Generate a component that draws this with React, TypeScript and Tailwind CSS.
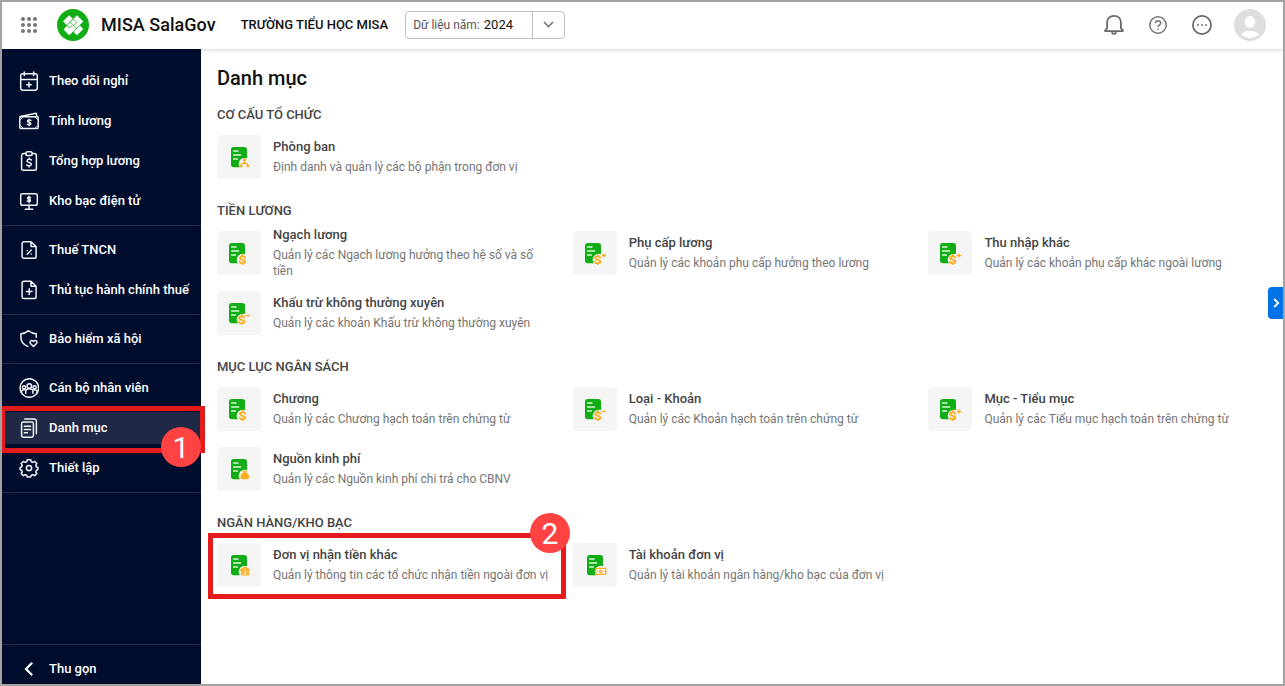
import clsx from 'clsx';
import React from 'react';

type TileKind = 'org' | 'dollar' | 'plus' | 'minus' | 'bag' | 'house' | 'note';

interface Item {
  title: string;
  description: string;
  icon: TileKind;
  step?: number;
}

interface Section {
  label: string;
  items: Item[];
}

interface MenuItem {
  label: string;
  icon: React.ReactNode;
  active?: boolean;
}

const SECTIONS: Section[] = [
  {
    label: 'CƠ CẤU TỔ CHỨC',
    items: [
      {
        title: 'Phòng ban',
        description: 'Định danh và quản lý các bộ phận trong đơn vị',
        icon: 'org',
      },
    ],
  },
  {
    label: 'TIỀN LƯƠNG',
    items: [
      {
        title: 'Ngạch lương',
        description: 'Quản lý các Ngạch lương hưởng theo hệ số và số tiền',
        icon: 'dollar',
      },
      {
        title: 'Phụ cấp lương',
        description: 'Quản lý các khoản phụ cấp hưởng theo lương',
        icon: 'plus',
      },
      {
        title: 'Thu nhập khác',
        description: 'Quản lý các khoản phụ cấp khác ngoài lương',
        icon: 'plus',
      },
      {
        title: 'Khấu trừ không thường xuyên',
        description: 'Quản lý các khoản Khấu trừ không thường xuyên',
        icon: 'minus',
      },
    ],
  },
  {
    label: 'MỤC LỤC NGÂN SÁCH',
    items: [
      {
        title: 'Chương',
        description: 'Quản lý các Chương hạch toán trên chứng từ',
        icon: 'dollar',
      },
      {
        title: 'Loại - Khoản',
        description: 'Quản lý các Khoản hạch toán trên chứng từ',
        icon: 'minus',
      },
      {
        title: 'Mục - Tiểu mục',
        description: 'Quản lý các Tiểu mục hạch toán trên chứng từ',
        icon: 'plus',
      },
      {
        title: 'Nguồn kinh phí',
        description: 'Quản lý các Nguồn kinh phí chi trả cho CBNV',
        icon: 'bag',
      },
    ],
  },
  {
    label: 'NGÂN HÀNG/KHO BẠC',
    items: [
      {
        title: 'Đơn vị nhận tiền khác',
        description: 'Quản lý thông tin các tổ chức nhận tiền ngoài đơn vị',
        icon: 'house',
        step: 2,
      },
      {
        title: 'Tài khoản đơn vị',
        description: 'Quản lý tài khoản ngân hàng/kho bạc của đơn vị',
        icon: 'note',
      },
    ],
  },
];

const MenuIcon: React.FC<{ children: React.ReactNode }> = ({ children }) => (
  <svg
    width="20"
    height="20"
    viewBox="0 0 20 20"
    fill="none"
    stroke="#f1f2f5"
    strokeWidth="1.5"
    strokeLinecap="round"
    strokeLinejoin="round"
    className="shrink-0"
  >
    {children}
  </svg>
);

const MENU: MenuItem[][] = [
  [
    {
      label: 'Theo dõi nghỉ',
      icon: (
        <MenuIcon>
          <rect x="1.7" y="2.7" width="16.6" height="16.6" rx="2.2" />
          <path d="M1.7 8.6h16.6M5.3 .9v3.6M14.7 .9v3.6M10 11.6v4.4M7.8 13.8h4.4" />
        </MenuIcon>
      ),
    },
    {
      label: 'Tính lương',
      icon: (
        <MenuIcon>
          <rect x=".8" y="5.8" width="18.4" height="11.6" rx="1" />
          <path d="M1.2 5.6 17.2 2.2l.8 3.4" />
          <path
            d="M1.5 8.500 3.500 6.500M18.500 8.500l-2-2M1.500 14.700l2 2M18.500 14.700l-2 2"
            strokeWidth="1"
          />
          <path
            d="M12 9.500c-.6-.8-3.700-.9-3.700.6 0 1.600 3.700 1 3.700 2.600 0 1.600-3.200 1.400-3.900.6M10.100 8.200v6.600"
            strokeWidth="1.300"
          />
        </MenuIcon>
      ),
    },
    {
      label: 'Tổng hợp lương',
      icon: (
        <MenuIcon>
          <path d="M6.800 2.600H4.600a2 2 0 0 0-2 2v12.600a2 2 0 0 0 2 2h10.800a2 2 0 0 0 2-2V4.600a2 2 0 0 0-2-2h-2.200" />
          <rect x="6.800" y=".8" width="6.400" height="3.800" rx="1.800" />
          <path d="M12.300 9c-.6-1-4.300-1.100-4.300 1 0 1.900 4.400 1.200 4.400 3.200 0 2-3.900 1.900-4.600.8M10.100 7v1M10.100 15v1" />
        </MenuIcon>
      ),
    },
    {
      label: 'Kho bạc điện tử',
      icon: (
        <MenuIcon>
          <rect x="1.700" y="2.700" width="16.600" height="11.600" rx="1.800" />
          <path d="M10 14.500v3.700M6.300 18.200h7.400" />
          <path d="M11.500 6.600c-.6-.6-3-.6-3 .6s3 .9 3 2.200-2.500 1.200-3.100.5M10 5.200v6.600" />
        </MenuIcon>
      ),
    },
  ],
  [
    {
      label: 'Thuế TNCN',
      icon: (
        <MenuIcon>
          <path d="M12 1.700H5a1.900 1.900 0 0 0-1.900 1.900v12.800A1.900 1.900 0 0 0 5 18.300h10.200a1.900 1.900 0 0 0 1.900-1.900V6.600zM12 1.700v4.900h5" />
          <path d="m8.200 14.300 4-4.200M8.200 10.600v.1M12.200 14v.1" />
        </MenuIcon>
      ),
    },
    {
      label: 'Thủ tục hành chính thuế',
      icon: (
        <MenuIcon>
          <path d="M12 1.200H5a1.900 1.900 0 0 0-1.900 1.900v13.600A1.900 1.900 0 0 0 5 18.600h10.200a1.900 1.900 0 0 0 1.900-1.900V6.200zM12 1.200v5h5" />
          <path d="M10.200 8.800v5.600M7.400 11.600H13" />
        </MenuIcon>
      ),
    },
  ],
  [
    {
      label: 'Bảo hiểm xã hội',
      icon: (
        <MenuIcon>
          <path d="M8.800 17.400C4.600 15.900 1.900 12.400 1.900 8V4.700C4.700 4.800 7 3.800 9.600 1.700c2.500 2.100 4.800 3.100 7.600 3v3.500" />
          <path d="m14.500 17.500-3-3c-1.500-1.600.8-4.200 3-2.100 2.200-2.100 4.500.5 3 2.100z" />
        </MenuIcon>
      ),
    },
  ],
  [
    {
      label: 'Cán bộ nhân viên',
      icon: (
        <MenuIcon>
          <circle cx="10.300" cy="10" r="9.300" />
          <circle cx="10.300" cy="8" r="2.300" />
          <path d="M6.700 15.200v-1.700c0-3.800 7.200-3.800 7.200 0v1.700" />
          <circle cx="5" cy="9.300" r="1.600" />
          <circle cx="15.600" cy="9.300" r="1.600" />
          <path d="M2.400 14.200c0-2.100 1.700-2.900 3.600-2.400M18.200 14.200c0-2.100-1.700-2.900-3.600-2.400" />
        </MenuIcon>
      ),
    },
    {
      label: 'Danh mục',
      active: true,
      icon: (
        <MenuIcon>
          <rect x="2.600" y="4" width="11.800" height="15.200" rx="1.700" />
          <path d="M5.700 1.100h9.700a2 2 0 0 1 2 2v12.600M5.400 8.300h6.200M5.400 11.500h6.200M5.400 14.700h3" />
        </MenuIcon>
      ),
    },
    {
      label: 'Thiết lập',
      icon: (
        <MenuIcon>
          <circle cx="10" cy="10" r="2.600" />
          <path d="m8.300 1.700-.6 2-1.600.7-1.900-1-2 2.200 1 1.800-.6 1.500-1.500.6v2l1.500.7.6 1.600-1 1.700 2.100 2.200 1.900-1 1.500.6.6 1.700h3.400l.6-1.700 1.500-.6 1.900 1 2.100-2.200-1-1.700.6-1.600 1.500-.7v-2l-1.500-.6-.6-1.500 1-1.800-2-2.200-1.900 1-1.600-.7-.6-2z" />
        </MenuIcon>
      ),
    },
  ],
];

const DollarMark: React.FC = () => (
  <g fill="none" stroke="#fbac1c" strokeWidth="1.800" strokeLinecap="round">
    <path d="M16 14.600c-.5-1.800-5.100-1.800-5.100.5 0 2.200 5.300 1.200 5.300 3.500 0 2.200-4.900 2.100-5.500.1M13.500 12v1.200M13.500 20.200v1" />
  </g>
);

const TileIcon: React.FC<{ kind: TileKind }> = ({ kind }) => {
  const isDollar = kind === 'dollar' || kind === 'plus' || kind === 'minus';
  // the signed variants leave room for the +/- on the right
  const isSigned = kind === 'plus' || kind === 'minus';
  return (
    <svg
      width={isDollar ? 22 : 20}
      height="22"
      viewBox={isDollar ? '0 0 22 22' : '0 0 20 22'}
      className={isDollar ? 'ml-3' : 'ml-3.5'}
    >
      <rect width="16" height="20.300" rx="2.800" fill="#10ad15" />
      <path
        d="M2.600 3.900h4.400M2.600 8h7M2.600 12.100h3.800"
        stroke="#dcf3dc"
        strokeWidth="1.500"
        strokeLinecap="round"
      />
      <circle cx="13.800" cy="16.800" r="6.100" fill="#f5f5f5" />
      {isDollar && (
        <g transform={isSigned ? 'translate(-0.800 0)' : undefined}>
          <DollarMark />
        </g>
      )}
      {kind === 'plus' && (
        <path
          d="M16.800 12.500h4.200M18.900 10.400v4.200"
          stroke="#fbac1c"
          strokeWidth="1.300"
        />
      )}
      {kind === 'minus' && (
        <path d="M16.600 12.500h4.400" stroke="#fbac1c" strokeWidth="1.400" />
      )}
      {kind === 'org' && (
        <g fill="none" stroke="#fbac1c" strokeWidth="1.200">
          <path d="M13.500 13v3.300M10.300 18.700v-.8q0-1.600 1.600-1.600h3.200q1.600 0 1.600 1.600v.8" />
          <circle cx="13.500" cy="12.700" r="1" fill="#fbac1c" />
          <circle cx="10.300" cy="19" r=".8" fill="#fbac1c" />
          <circle cx="16.800" cy="19" r=".8" fill="#fbac1c" />
        </g>
      )}
      {kind === 'bag' && (
        <path
          d="m11.300 11.600 1.300.6 1.200-.7 1.200.7 1.500-.6-1.200 2.200c1.900 1 2.800 2.700 2.800 4.300 0 1.400-.9 2.100-2.200 2.100h-4.300c-1.300 0-2.200-.7-2.200-2.100 0-1.600.9-3.300 2.900-4.300z"
          fill="#fbac1c"
        />
      )}
      {kind === 'house' && (
        <g>
          <path d="m9 14.600 5-3.200 5 3.200v1.200H9z" fill="#fbac1c" />
          <rect x="10" y="15.500" width="8" height="5" fill="#fbac1c" />
          <path d="M11.800 17h4.400M11.800 18.800h4.400" stroke="#fde6bd" />
          <circle cx="14" cy="14.300" r=".7" fill="#fff" />
        </g>
      )}
      {kind === 'note' && (
        <g fill="none" stroke="#fbac1c" strokeWidth="1.300">
          <rect x="8.700" y="13.300" width="10" height="6" rx=".5" />
          <circle cx="13.700" cy="16.300" r="1.200" />
          <path d="M10.500 15.500v1.600M16.900 15.500v1.600" strokeWidth=".8" />
        </g>
      )}
    </svg>
  );
};

const StepBadge: React.FC<{ step: number; className: string }> = ({
  step,
  className,
}) => (
  <span
    className={clsx(
      'absolute z-20 flex size-10 items-center justify-center rounded-full bg-[#ff4343] pt-0.5 text-[30px] font-normal leading-none text-white',
      className,
    )}
  >
    {step}
  </span>
);

const Logo: React.FC = () => (
  <svg width="32" height="32" viewBox="0 0 32 32" className="ml-5 shrink-0">
    <circle cx="16" cy="16" r="16" fill="#10ad15" />
    <path
      d="m6 12.300 6-6 4.200 3.600 3.700-3.600 6.400 6.200-3.700 3.700 3.700 3.700-6.400 6.400-3.700-3.900-4 3.900-5.700-5.800 3.700-3.900z"
      fill="#fff"
    />
    <path
      d="m16.200 9.900-3.400 3.300 6.600 6.500-3.200 3M10.200 16.200l2.600-3M16.200 9.900l3.500 3.500-2.800 2.800M22.600 16.200l-3.200 3.500M10.200 16.200l2.500 2.500 2.200-1.700"
      fill="none"
      stroke="#10ad15"
      strokeWidth=".8"
    />
  </svg>
);

const Header: React.FC = () => (
  <header className="relative z-10 flex h-[47px] shrink-0 items-center bg-white pb-0.5 pl-[19px] pr-[17px] shadow-[0_1px_4px_rgba(0,0,0,0.18)]">
    <svg width="16" height="16" viewBox="0 0 16 16" fill="#757575">
      {[2, 8, 14].map((y) =>
        [2, 8, 14].map((x) => <circle key={`${x}-${y}`} cx={x} cy={y} r="2" />),
      )}
    </svg>
    <Logo />
    <span className="ml-3 text-[18px] font-medium leading-6 tracking-[0.03px] text-[#111]">
      MISA SalaGov
    </span>
    <span className="ml-[25px] text-[13px] font-medium text-[#111]">
      TRƯỜNG TIỂU HỌC MISA
    </span>
    <div className="ml-[17px] flex h-7 w-40 items-center rounded border border-[#bfbfbf]">
      <div className="flex flex-1 items-baseline gap-1 pl-[7px]">
        <span className="text-[12px] text-[#555]">Dữ liệu năm:</span>
        <span className="text-[13px] text-[#111]">2024</span>
      </div>
      <span className="flex h-full w-8 items-center justify-center border-l border-[#bfbfbf]">
        <svg width="11" height="7" viewBox="0 0 11 7" fill="none">
          <path d="m1 1 4.500 4.500L10 1" stroke="#757575" strokeWidth="1.600" />
        </svg>
      </span>
    </div>

    <div className="ml-auto flex items-center">
      <svg
        width="20"
        height="22"
        viewBox="0 0 20 22"
        fill="none"
        stroke="#686868"
        strokeWidth="1.800"
        strokeLinejoin="round"
      >
        <path d="M1.200 17.200h17.600v-.9l-1.900-2.100V8.400C16.900 4.500 14 1.900 10 1.900S3.100 4.500 3.100 8.400v5.800l-1.900 2.100z" />
        <path d="M7.800 18.300c.4 2 4 2 4.400 0" />
      </svg>
      <svg
        width="18"
        height="18"
        viewBox="0 0 18 18"
        fill="none"
        stroke="#757575"
        strokeWidth="1.500"
        className="ml-[25px]"
      >
        <circle cx="9" cy="9" r="8.200" />
        <path d="M6.500 7.200c0-3.200 5.200-3.200 5.200-.1 0 2-2.600 2-2.600 4M9.100 12.500v1.400" />
      </svg>
      <svg width="20" height="20" viewBox="0 0 20 20" className="ml-[25px]">
        <circle
          cx="10"
          cy="10"
          r="9.100"
          fill="none"
          stroke="#686868"
          strokeWidth="1.700"
        />
        <path
          d="M5 9.300h1.800v1.500H5zM9.100 9.300h1.800v1.500H9.100zM13.200 9.300H15v1.500h-1.800z"
          fill="#686868"
        />
      </svg>
      <svg width="32" height="32" viewBox="0 0 32 32" className="ml-[22px]">
        <circle cx="16" cy="16" r="16" fill="#dedede" />
        <ellipse cx="16" cy="13" rx="5.300" ry="6" fill="#fff" />
        <path
          d="M7 25.600C8.700 23 12 21.800 16 21.800s7.300 1.200 9 3.800c-2.400 2.200-5.500 3.400-9 3.400s-6.600-1.200-9-3.400z"
          fill="#fff"
        />
      </svg>
    </div>
  </header>
);

const Sidebar: React.FC = () => (
  <aside className="z-20 flex w-[199px] shrink-0 flex-col bg-[#000d2d] pt-2 text-white">
    {MENU.map((group) => (
      <ul
        key={group[0].label}
        className="flex flex-col gap-2 border-b border-[#1f2a47] py-2"
      >
        {group.map((item) => (
          <li
            key={item.label}
            className={clsx(
              'relative flex h-8 items-center gap-2.5 whitespace-nowrap pl-[17px] text-[13px] font-medium',
              item.active && 'bg-[#1f2844]',
            )}
          >
            {item.icon}
            <span className="-mt-px">{item.label}</span>
            {item.active && (
              <>
                <div className="absolute -left-0.5 -top-1.5 z-10 h-[47px] w-[205px] border-[5px] border-[#e31b1b]" />
                <StepBadge step={1} className="left-[159px] top-[15px]" />
              </>
            )}
          </li>
        ))}
      </ul>
    ))}
    <div className="mt-auto flex h-10 items-center border-t border-[#1f2a47] pl-[22px] pt-2 text-[13px] font-medium">
      <svg width="10" height="14" viewBox="0 0 10 14" fill="none">
        <path d="M8.200 .8 2 7l6.200 6.200" stroke="#fff" strokeWidth="2.200" />
      </svg>
      <span className="ml-[15px]">Thu gọn</span>
    </div>
  </aside>
);

const CategoryItem: React.FC<{ item: Item }> = ({ item }) => (
  <div className="relative flex h-11 items-center pr-6">
    <div className="flex size-11 shrink-0 items-start rounded bg-[#f5f5f5] pt-3">
      <TileIcon kind={item.icon} />
    </div>
    <div className="ml-3">
      <h3 className="text-[13px] font-medium leading-4 text-[#444]">
        {item.title}
      </h3>
      <p className="mt-1 text-[12px] leading-4 text-[#757575]">
        {item.description}
      </p>
    </div>
    {item.step && (
      <>
        <div className="absolute -left-[9px] -top-2.5 h-[66px] w-[358px] border-[5px] border-[#e31b1b]" />
        <StepBadge step={item.step} className="-top-[30px] left-[313px]" />
      </>
    )}
  </div>
);

export default function App() {
  return (
    <div className="flex h-[686px] w-[1285px] flex-col overflow-hidden border-2 border-[#a3a3a3] bg-white font-[Roboto,sans-serif]">
      <Header />
      <div className="flex min-h-0 flex-1">
        <Sidebar />
        <main className="relative flex-1 pl-4 pt-[17px]">
          <h1 className="text-[20px] font-medium leading-6 text-[#111]">
            Danh mục
          </h1>
          <div className="mt-[17px] flex flex-col gap-6">
            {SECTIONS.map((section) => (
              <section key={section.label}>
                <h2 className="text-[13px] font-medium leading-4 text-[#444]">
                  {section.label}
                </h2>
                <div className="mt-3 grid grid-cols-[355.7px_355.7px_1fr] gap-y-4">
                  {section.items.map((item) => (
                    <CategoryItem key={item.title} item={item} />
                  ))}
                </div>
              </section>
            ))}
          </div>

          <button
            type="button"
            className="absolute right-0 top-[238px] flex h-8 w-[15px] items-center justify-center rounded-l bg-[#0073e6] pl-0.5"
          >
            <svg width="7" height="10" viewBox="0 0 7 10" fill="none">
              <path d="m1.200 1 4 4-4 4" stroke="#fff" strokeWidth="1.800" />
            </svg>
          </button>
        </main>
      </div>
    </div>
  );
}
